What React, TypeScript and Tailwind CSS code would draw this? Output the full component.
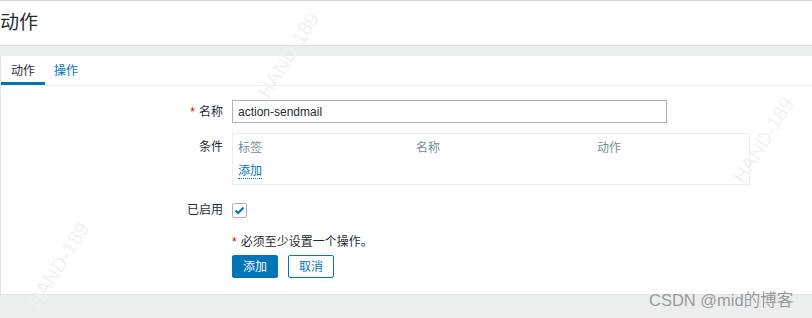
import React from "react";

function Mark({ x, y }: { x: number; y: number }) {
  return (
    <div
      className="absolute pointer-events-none text-[20px] text-[#f1f2f3] whitespace-nowrap -rotate-[58deg] origin-center"
      style={{ left: x, top: y, fontFamily: '"Liberation Sans", sans-serif' }}
    >
      HAND-189
    </div>
  );
}

export default function App() {
  const font = { fontFamily: '"Liberation Sans", Arial, "Noto Sans CJK SC", sans-serif' };
  return (
    <div className="relative w-[812px] h-[318px] overflow-hidden bg-[#ebeeef] text-[#1f2c33] text-[12px]" style={font}>
      <div className="border-t border-[#d3d3d3] bg-white h-[46px] flex items-center border-b border-b-[#dcdfe0]">
        <h1 className="text-[19px] leading-none text-[#1f2c33] pl-0 -mt-[2px]">动作</h1>
      </div>
      <div className="h-[10px]" />
      <div className="bg-white border-l border-[#dfe4e7] h-[239px] border-b border-b-[#e1e5e7]">
        <div className="flex h-[30px] border-b border-[#eef0f1]">
          <div className="px-[10px] flex items-center border-b-[3px] border-[#0275b8] pt-[3px]">动作</div>
          <div className="px-[9px] flex items-center text-[#0275b8] pt-[3px] border-b-[3px] border-transparent">操作</div>
        </div>
        <div className="flex flex-col pt-[14px]">
          <div className="flex items-center">
            <div className="w-[222px] text-right pr-0">
              <span className="text-[#d40000] mr-[4px]">*</span>名称
            </div>
            <div className="ml-[9px] w-[435px] h-[23px] border border-[#b1b1b1] bg-white flex items-center px-[5px]">
              action-sendmail
            </div>
          </div>
          <div className="flex mt-[10px]">
            <div className="w-[222px] text-right pt-[5px]">条件</div>
            <div className="ml-[9px] w-[518px] h-[52px] border border-[#ebeeef] px-[5px] pt-[5px]">
              <div className="flex text-[#768d99]">
                <div className="w-[178px]">标签</div>
                <div className="w-[181px]">名称</div>
                <div>动作</div>
              </div>
              <div className="mt-[5px]">
                <span className="text-[#0275b8] border-b border-dotted border-[#0275b8] leading-[14px] inline-block">添加</span>
              </div>
            </div>
          </div>
          <div className="flex items-center mt-[16px]">
            <div className="w-[222px] text-right">已启用</div>
            <div className="ml-[9px] w-[15px] h-[15px] border border-[#b1b1b1] rounded-[2px] flex items-center justify-center bg-white">
              <svg width="11" height="9" viewBox="0 0 11 9">
                <path d="M1.5 4.5 L4.2 7 L9.5 1.5" stroke="#0275b8" strokeWidth="2" fill="none" />
              </svg>
            </div>
          </div>
          <div className="ml-[231px] mt-[14px] flex items-center">
            <span className="text-[#d40000] mr-[4px]">*</span>
            <span>必须至少设置一个操作。</span>
          </div>
          <div className="ml-[231px] mt-[4px] flex gap-[10px]">
            <button className="w-[46px] h-[23px] bg-[#0275b8] text-white rounded-[2px] border border-[#0275b8]">添加</button>
            <button className="w-[46px] h-[23px] bg-white text-[#0275b8] rounded-[2px] border border-[#0275b8]">取消</button>
          </div>
        </div>
      </div>
      <Mark x={240} y={40} />
      <Mark x={715} y={125} />
      <Mark x={10} y={250} />
      <div className="absolute left-[649px] top-[290px] text-[16.5px] text-[#9a9a9a] leading-[20px]" style={{ fontFamily: '"Liberation Sans", "Noto Sans CJK SC", sans-serif' }}>
        CSDN @mid的博客
      </div>
    </div>
  );
}
